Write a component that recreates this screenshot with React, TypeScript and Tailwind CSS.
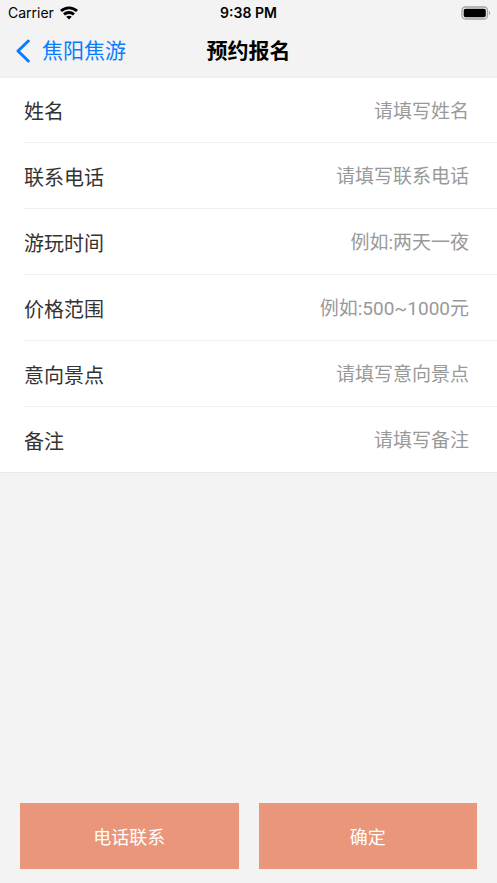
type Field = { id: string; label: string; placeholder: string; type?: string };

const fields: Field[] = [
  { id: "name", label: "姓名", placeholder: "请填写姓名" },
  { id: "phone", label: "联系电话", placeholder: "请填写联系电话", type: "tel" },
  { id: "time", label: "游玩时间", placeholder: "例如:两天一夜" },
  { id: "price", label: "价格范围", placeholder: "例如:500~1000元" },
  { id: "spot", label: "意向景点", placeholder: "请填写意向景点" },
  { id: "note", label: "备注", placeholder: "请填写备注" },
];

function WifiIcon() {
  return (
    <svg width="18" height="14" viewBox="0 0 18 14" fill="none" stroke="#000" strokeWidth="2.9" aria-hidden="true">
      <path d="M1 5C5.5.8 12.5.8 17 5" />
      <path d="M4 8.4c2.8-2.5 7.2-2.5 10 0" />
      <path d="M9 13.4 6.2 10.7c1.6-1.4 4-1.4 5.6 0Z" fill="#000" stroke="none" />
    </svg>
  );
}

function BatteryIcon() {
  return (
    <svg width="30" height="14" viewBox="0 0 30 14" aria-hidden="true">
      <rect x="1" y="1" width="25.5" height="12" rx="3.5" fill="none" stroke="#a3a3a3" strokeWidth="1.3" />
      <rect x="2.7" y="2.7" width="22.1" height="8.6" rx="1.8" fill="#000" />
      <path d="M28 5v4c1.7-.6 1.7-3.4 0-4Z" fill="#a3a3a3" />
    </svg>
  );
}

export default function App() {
  return (
    <div className="flex min-h-screen flex-col bg-[#f3f3f3] font-['Inter','Noto_Sans_CJK_SC',sans-serif]">
      <header className="border-b border-[#efefef] text-black">
        <div className="grid h-[25px] grid-cols-[1fr_auto_1fr] items-center px-1.5 text-sm">
          <div className="flex items-center gap-1.5 pl-0.5">
            <span>Carrier</span>
            <WifiIcon />
          </div>
          <span className="font-semibold">9:38 PM</span>
          <div className="flex justify-end">
            <BatteryIcon />
          </div>
        </div>
        <div className="grid h-[52px] grid-cols-[1fr_auto_1fr] items-center px-4">
          <button type="button" className="flex items-center gap-3 text-[21px] text-[#087cff]">
            <svg width="14" height="24" viewBox="0 0 14 24" fill="none" stroke="currentColor" strokeWidth="3" strokeLinecap="round" strokeLinejoin="round" aria-hidden="true">
              <path d="M12.3 2 2 12l10.3 10" />
            </svg>
            <span>焦阳焦游</span>
          </button>
          <h1 className="text-[21px] font-bold">预约报名</h1>
        </div>
      </header>

      <form id="booking" className="bg-white" onSubmit={(e) => e.preventDefault()}>
        <div className="border-b border-[#e9e9e9] pl-6">
          {fields.map((f) => (
            <div
              key={f.id}
              className="flex h-[66px] items-center border-b border-[#efefef] pt-1 pr-7 first:h-[65px] last:h-[65px] last:border-b-0"
            >
              <label htmlFor={f.id} className="shrink-0 text-xl text-[#333]">
                {f.label}
              </label>
              <input
                id={f.id}
                type={f.type ?? "text"}
                placeholder={f.placeholder}
                className="min-w-0 flex-1 bg-transparent text-right font-['Roboto','Noto_Sans_CJK_SC',sans-serif] text-[19px] text-[#333] outline-none placeholder:text-[#999]"
              />
            </div>
          ))}
        </div>
      </form>

      <div className="mt-auto grid grid-cols-2 gap-5 px-5 pb-3.5 text-lg text-white">
        <button type="button" className="h-[66px] bg-[#e9967a] pt-1">
          电话联系
        </button>
        <button type="submit" form="booking" className="h-[66px] bg-[#e9967a] pt-1">
          确定
        </button>
      </div>
    </div>
  );
}
